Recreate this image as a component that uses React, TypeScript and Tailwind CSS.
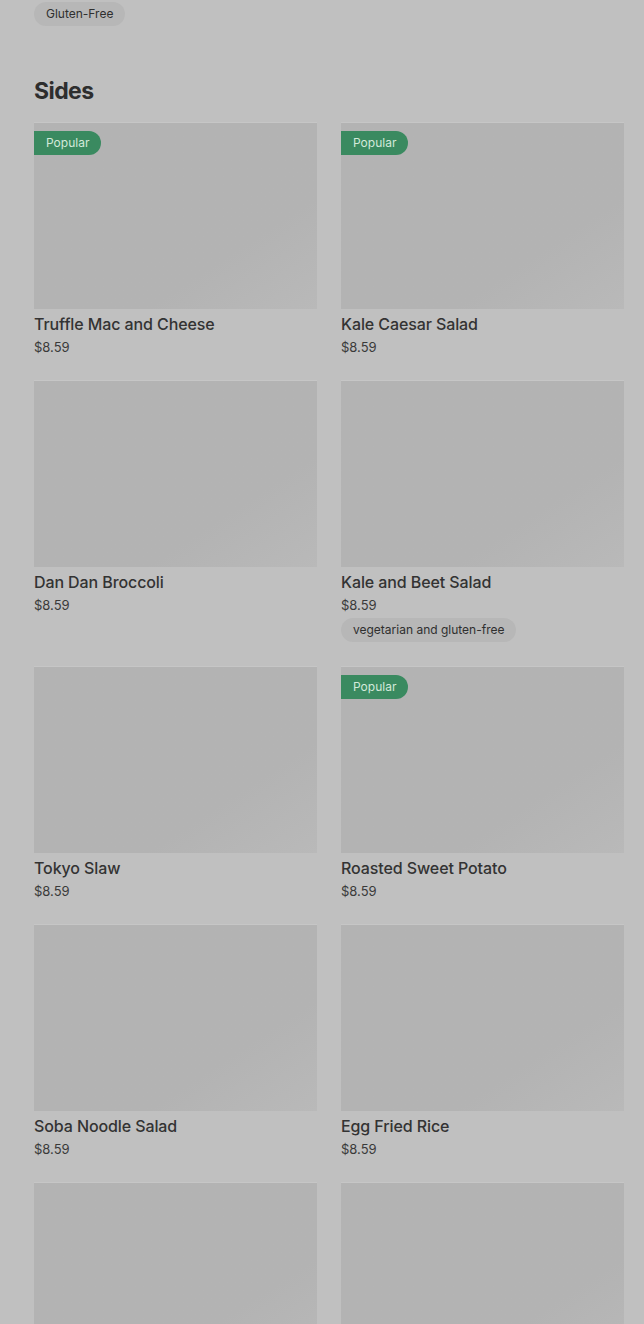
import React from "react";

type Item = {
  name: string;
  price: string;
  popular?: boolean;
  tag?: string;
};

const sides: Item[] = [
  { name: "Truffle Mac and Cheese", price: "$8.59", popular: true },
  { name: "Kale Caesar Salad", price: "$8.59", popular: true },
  { name: "Dan Dan Broccoli", price: "$8.59" },
  { name: "Kale and Beet Salad", price: "$8.59", tag: "vegetarian and gluten-free" },
  { name: "Tokyo Slaw", price: "$8.59" },
  { name: "Roasted Sweet Potato", price: "$8.59", popular: true },
  { name: "Soba Noodle Salad", price: "$8.59" },
  { name: "Egg Fried Rice", price: "$8.59" },
  { name: "", price: "" },
  { name: "", price: "" },
];

const Tag = ({ label }: { label: string }) => (
  <span className="inline-flex h-6 items-center rounded-full bg-[#b7b7b7] px-3 text-xs text-[#2f2f2f]">
    {label}
  </span>
);

const ItemCard = ({ item }: { item: Item }) => (
  <div className="flex flex-col items-start">
    <div className="relative h-[187px] w-full border-t border-[#c6c6c6] bg-gradient-to-br from-[#b3b3b3] from-70% to-[#b9b9b9]">
      {item.popular && (
        <span className="absolute left-0 top-2 flex h-6 items-center rounded-r-full bg-[#3a8a60] pl-3 pr-3 text-xs text-[#d3e9da]">
          Popular
        </span>
      )}
    </div>
    {item.name && (
      <>
        <p className="mt-[5px] text-base font-medium leading-5 tracking-[-0.1px] text-[#333333]">
          {item.name}
        </p>
        <p className="mt-1 text-[13px] leading-[18px] text-[#3a3a3a]">{item.price}</p>
      </>
    )}
    {item.tag && (
      <div className="mt-1 flex">
        <Tag label={item.tag} />
      </div>
    )}
  </div>
);

export default function App() {
  return (
    <div
      className="h-[1324px] w-full overflow-hidden bg-[#c0c0c0] pl-[34px] pr-5 pt-[2px]"
      style={{ fontFamily: "Inter, 'Liberation Sans', sans-serif" }}
    >
      <div className="flex">
        <Tag label="Gluten-Free" />
      </div>

      <h2 className="mt-[51px] text-[23px] font-bold leading-7 tracking-tight text-[#2e2e2e]">
        Sides
      </h2>

      <div className="mt-[17px] grid grid-cols-2 gap-x-6 gap-y-6">
        {sides.map((item, i) => (
          <ItemCard key={i} item={item} />
        ))}
      </div>
    </div>
  );
}
